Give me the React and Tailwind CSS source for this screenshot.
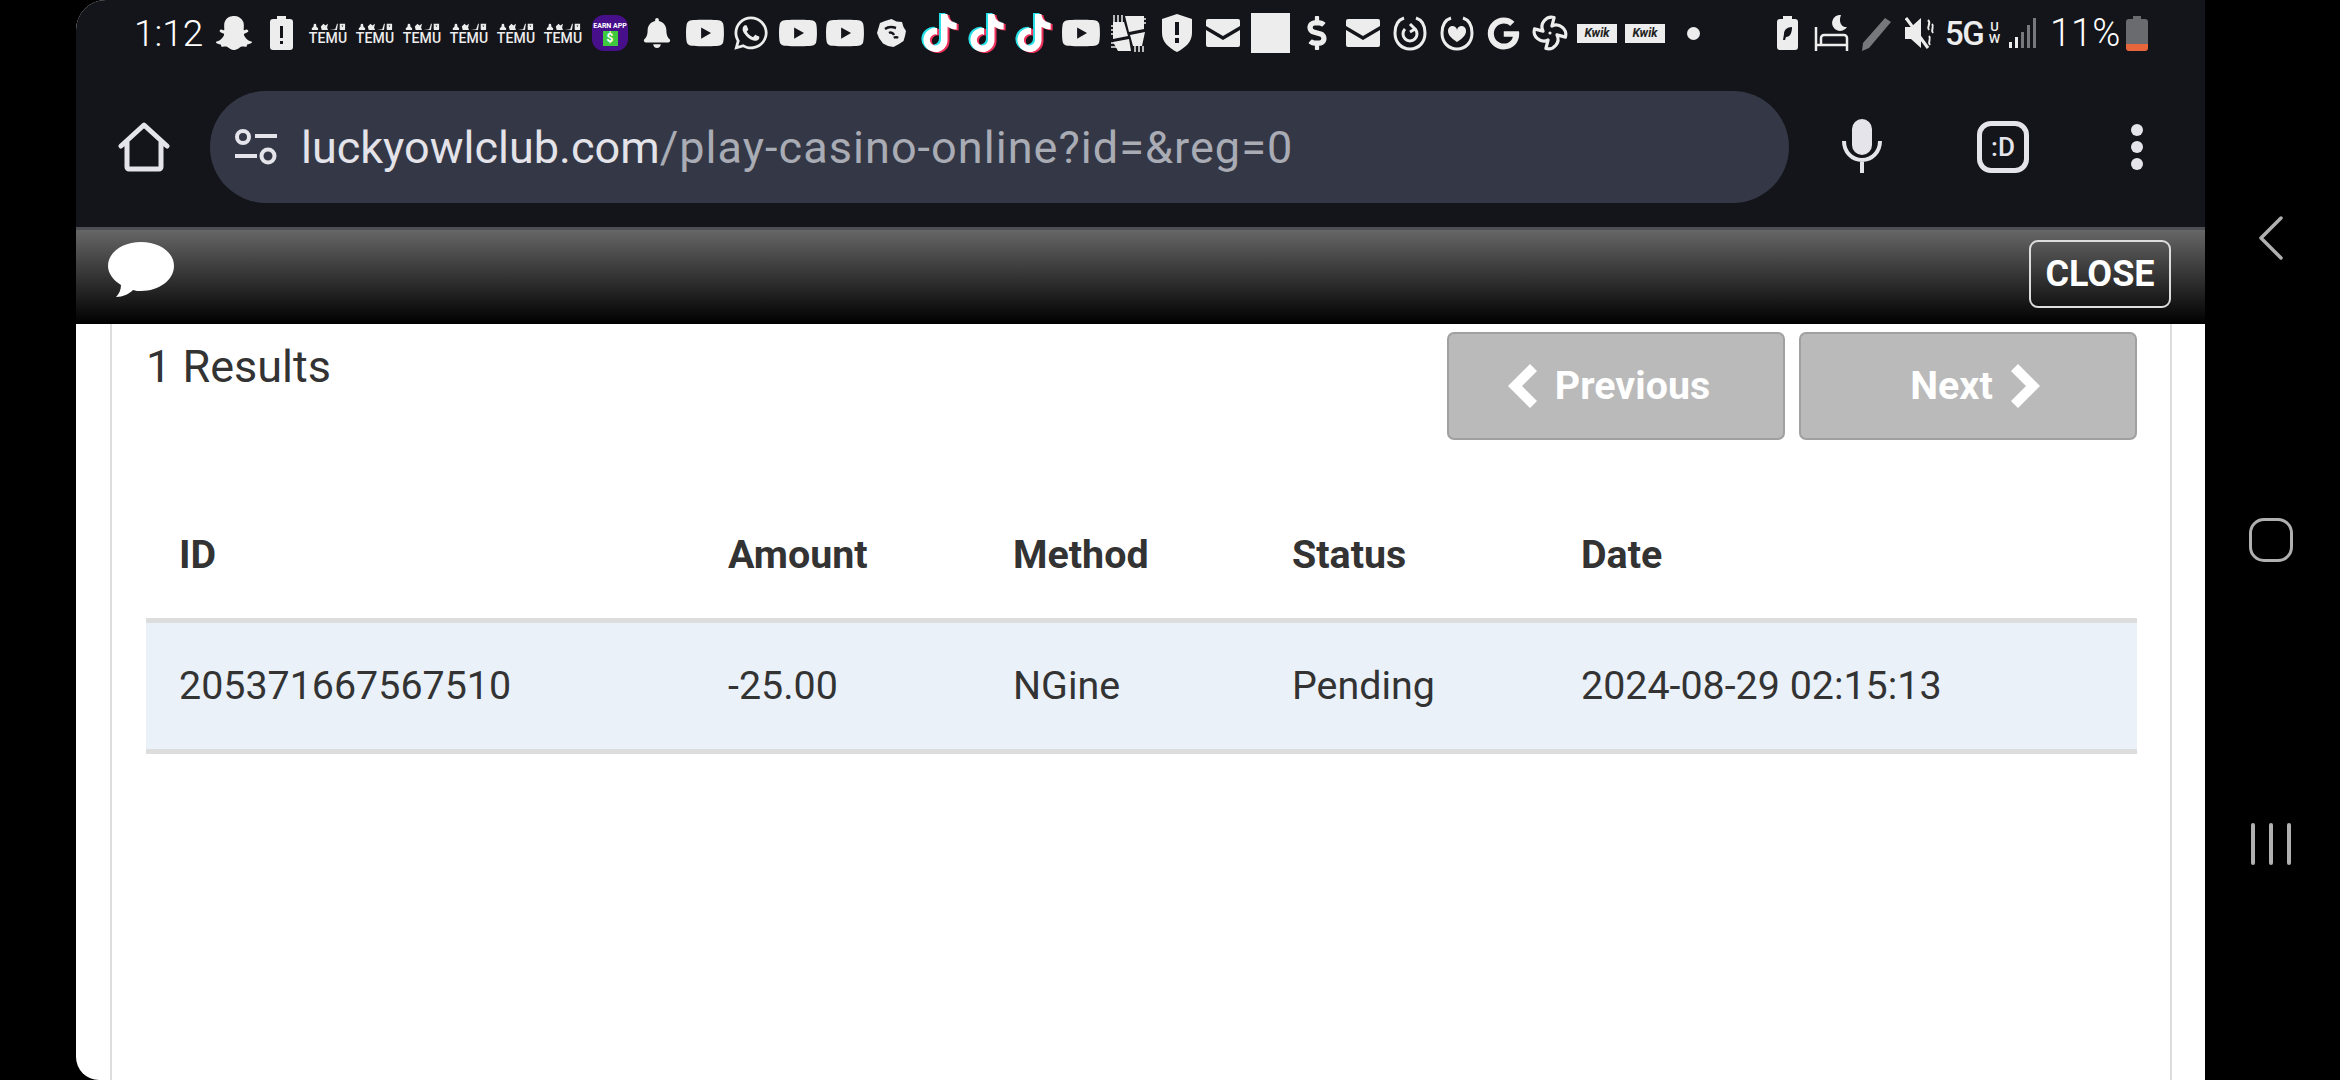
import { FaSnapchatGhost, FaWhatsapp, FaYoutube, FaBell, FaTiktok, FaDollarSign, FaGoogle } from 'react-icons/fa';
import { Fan } from 'lucide-react';

const roboto = "font-['Roboto','Liberation_Sans',sans-serif]";

function Temu({ className }) {
  return (
    <div className={`w-[40px] h-[22px] shrink-0 flex flex-col items-center justify-between ${className}`}>
      <svg width="38" height="9" viewBox="0 0 40 10" fill="#ededed">
        <path d="M2 9h7V7L7 5V3.500a1.500 1.500 0 0 0-3 0V5L2 7z" />
        <path d="M12 5l3-3 2 2 3-2-1 4 1 3h-7z" />
        <path d="M22 9l6-1 2-6 1 0-1 7z" />
        <path fillRule="evenodd" d="M33 2h6v6a1 1 0 0 1-1 1h-4a1 1 0 0 1-1-1zM35 4l1 1.500L37 4z" />
      </svg>
      <span className="text-[14px] leading-[11px] font-medium text-[#ededed] tracking-[0.2px]">TEMU</span>
    </div>
  );
}

function Mail({ className }) {
  return (
    <svg className={`shrink-0 ${className}`} width="34" height="28" viewBox="0 0 34 28">
      <path d="M0 2a2 2 0 0 1 2-2h30a2 2 0 0 1 2 2v5L17 17 0 7z" fill="#ededed" />
      <path d="M0 11l17 10 17-10v15a2 2 0 0 1-2 2H2a2 2 0 0 1-2-2z" fill="#ededed" />
    </svg>
  );
}

function Tok({ className }) {
  return (
    <div className={`relative w-[34px] h-[40px] shrink-0 ${className}`}>
      <FaTiktok size={38} className="absolute left-[-3px] top-[0px] text-[#25e0e6]" />
      <FaTiktok size={38} className="absolute left-[1px] top-[2px] text-[#f0335c]" />
      <FaTiktok size={38} className="absolute left-[-1px] top-[1px] text-white" />
    </div>
  );
}

function Kwik({ className }) {
  return (
    <div className={`w-[40px] h-[19px] bg-[#ededed] shrink-0 flex items-center justify-center text-[12px] italic font-bold text-[#222] leading-none ${className}`}>
      Kwik
    </div>
  );
}

function StatusBar() {
  const yt = 'shrink-0 text-[#ededed]';
  return (
    <div className="h-[66px] flex items-center pl-[58px]">
      <span className="w-[67px] shrink-0 text-[37px] font-light leading-none text-white">1:12</span>
      <FaSnapchatGhost size={36} className="ml-[15px] shrink-0 text-[#ededed]" />
      <svg className="ml-[18px] shrink-0" width="23" height="34" viewBox="0 0 23 34">
        <path fillRule="evenodd" d="M7 0h9v3h4a3 3 0 0 1 3 3v25a3 3 0 0 1-3 3H3a3 3 0 0 1-3-3V6a3 3 0 0 1 3-3h4zM10 10v12h3V10zM10 25v3h3v-3z" fill="#ededed" />
      </svg>
      <Temu className="ml-[15px]" />
      <Temu className="ml-[7px]" />
      <Temu className="ml-[7px]" />
      <Temu className="ml-[7px]" />
      <Temu className="ml-[7px]" />
      <Temu className="ml-[7px]" />
      <div className="ml-[9px] w-[36px] h-[36px] rounded-[12px] bg-[#47108a] shrink-0 flex flex-col items-center justify-end pb-[5px]">
        <span className="text-[7px] leading-[9px] font-bold text-white whitespace-nowrap">EARN APP</span>
        <span className="w-[15px] h-[15px] bg-[#3fc93f] text-white text-[12px] leading-[15px] font-bold text-center">$</span>
      </div>
      <FaBell size={30} className="ml-[14px] shrink-0 text-[#ededed]" />
      <FaYoutube size={40} className={`ml-[13px] ${yt}`} />
      <FaWhatsapp size={38} className={`ml-[7px] ${yt}`} />
      <FaYoutube size={40} className={`ml-[8px] ${yt}`} />
      <FaYoutube size={40} className={`ml-[7px] ${yt}`} />
      <svg className="ml-[12px] shrink-0" width="29" height="29" viewBox="0 0 29 29">
        <path d="M14.500 0l5 2.500 5.500.5 1.500 5 2.500 4-1 5-1.500 5-4.500 3-5.500 3-5.500-1-5-2.500L2 19 0 14l1.500-5L3 4l5-2z" fill="#ededed" />
        <path d="M8 10c4-3 8-2 11-1M12 14c2-1 4 0 5 2M17 19c1-1 3-1 4 0" stroke="#14151a" strokeWidth="2.500" fill="none" />
      </svg>
      <Tok className="ml-[16px]" />
      <Tok className="ml-[13px]" />
      <Tok className="ml-[13px]" />
      <FaYoutube size={40} className={`ml-[11px] ${yt}`} />
      <svg className="ml-[9px] shrink-0" width="36" height="38" viewBox="0 0 36 38">
        <path d="M3 8h11l4 14-15 3zM15 2h19v13l-15 3zM20 21l15-3-3 14H23zM3 28l16-3 2 12H8z" fill="#ededed" />
        <path d="M4 1v7M8 1v7M12 1v7M1 12h4M1 16h4M1 20h4M1 29h6M1 33h6M25 32v6M29 32v6M33 32v6M30 5h6M30 9h6" stroke="#ededed" strokeWidth="1.500" />
      </svg>
      <svg className="ml-[16px] shrink-0" width="30" height="38" viewBox="0 0 30 38">
        <path fillRule="evenodd" d="M15 0l15 5v14c0 9-7 15-15 19C7 34 0 28 0 19V5zM13 8v13h4V8zM13 24v5h4v-5z" fill="#ededed" />
      </svg>
      <Mail className="ml-[14px]" />
      <div className="ml-[11px] w-[39px] h-[40px] bg-[#ededed] shrink-0" />
      <FaDollarSign size={34} className="ml-[10px] shrink-0 text-[#ededed]" />
      <Mail className="ml-[12px]" />
      <svg className="ml-[13px] shrink-0" width="34" height="36" viewBox="0 0 34 36" fill="none" stroke="#ededed">
        <path d="M11 3C5 5 2 11 2 18c0 9 6 16 15 16s15-7 15-16c0-7-3-13-9-15" strokeWidth="3" />
        <path d="M12 14a7 7 0 1 0 10 0M17 9l5 5-5 3" strokeWidth="3" />
      </svg>
      <svg className="ml-[13px] shrink-0" width="34" height="36" viewBox="0 0 34 36" fill="none">
        <path d="M11 3C5 5 2 11 2 18c0 9 6 16 15 16s15-7 15-16c0-7-3-13-9-15" stroke="#ededed" strokeWidth="3" />
        <path d="M17 27c-6-4-9-7-9-11a4.500 4.500 0 0 1 9-1 4.500 4.500 0 0 1 9 1c0 4-3 7-9 11z" fill="#ededed" />
      </svg>
      <FaGoogle size={33} className="ml-[13px] shrink-0 text-[#ededed]" />
      <Fan size={38} strokeWidth={2} className="ml-[11px] shrink-0 text-[#ededed]" />
      <Kwik className="ml-[8px]" />
      <Kwik className="ml-[8px]" />
      <span className="ml-[22px] w-[13px] h-[13px] rounded-full bg-[#ededed] shrink-0" />
      <svg className="ml-[77px] shrink-0" width="21" height="34" viewBox="0 0 21 34">
        <path fillRule="evenodd" d="M6 0h9v3h3a3 3 0 0 1 3 3v25a3 3 0 0 1-3 3H3a3 3 0 0 1-3-3V6a3 3 0 0 1 3-3h3zM15 11c-5 0-8 3-8 7l-1 6h2l1-3c4 0 6-4 6-10z" fill="#ededed" />
      </svg>
      <svg className="ml-[16px] shrink-0" width="35" height="36" viewBox="0 0 35 36" fill="none">
        <path d="M2 12v24M2 30h31v6M33 30v-7a3 3 0 0 0-3-3H10a3 3 0 0 0-3 3v7" stroke="#ededed" strokeWidth="2.500" />
        <path d="M27 0a8 8 0 1 0 6 12c-5 1-9-5-6-12z" fill="#ededed" />
      </svg>
      <svg className="ml-[12px] shrink-0" width="32" height="36" viewBox="0 0 32 36">
        <path d="M24 3l6 4L8 33l-7 3 1-8z" fill="#77787c" />
      </svg>
      <svg className="ml-[12px] shrink-0" width="30" height="34" viewBox="0 0 30 34" fill="none">
        <path d="M0 11h6l10-9v30L6 23H0z" fill="#ededed" />
        <path d="M1 2l22 30" stroke="#ededed" strokeWidth="3" />
        <path d="M23 4c4 4-2 6 1 10M27 8c3 3-2 5 1 9M24 20c3 3-2 5 1 9" stroke="#ededed" strokeWidth="2" />
      </svg>
      <span className="ml-[10px] w-[37px] shrink-0 text-[33px] font-medium leading-none tracking-[-1.5px] text-[#ededed]">5G</span>
      <div className="ml-[7px] w-[11px] flex flex-col items-center text-[13px] leading-[12px] font-medium text-[#ededed]">
        <span>U</span>
        <span>W</span>
      </div>
      <svg className="ml-[9px] shrink-0" width="27" height="30" viewBox="0 0 27 30">
        <rect x="0" y="24" width="3" height="6" fill="#ededed" />
        <rect x="6" y="19" width="3" height="11" fill="#ededed" />
        <rect x="12" y="14" width="3" height="16" fill="#77787c" />
        <rect x="18" y="7" width="3" height="23" fill="#77787c" />
        <rect x="24" y="0" width="3" height="30" fill="#77787c" />
      </svg>
      <span className="ml-[14px] w-[70px] shrink-0 text-[38px] font-light leading-none text-white">11%</span>
      <svg className="ml-[6px] shrink-0" width="22" height="35" viewBox="0 0 22 35">
        <path d="M7 0h8v3h4a3 3 0 0 1 3 3v22H0V6a3 3 0 0 1 3-3h4z" fill="#6a6b6f" />
        <path d="M0 28h22v4a3 3 0 0 1-3 3H3a3 3 0 0 1-3-3z" fill="#e8663c" />
      </svg>
    </div>
  );
}

function Toolbar() {
  return (
    <div className="h-[161px] flex items-center pt-[25px] pb-[24px] pl-[42px]">
      <svg className="shrink-0" width="52" height="50" viewBox="0 0 52 50" fill="none" stroke="#e4e4ea" strokeWidth="5" strokeLinejoin="round" strokeLinecap="round">
        <path d="M3 24L26 3l23 21M9 20v25a2 2 0 0 0 2 2h30a2 2 0 0 0 2-2V20" />
      </svg>
      <div className="ml-[40px] w-[1579px] h-[112px] rounded-full bg-[#343846] shrink-0 flex items-center pl-[25px]">
        <svg className="shrink-0" width="42" height="36" viewBox="0 0 42 36" fill="none" stroke="#e4e4ea" strokeWidth="4">
          <circle cx="8" cy="8" r="6" />
          <path d="M20 7h22M0 27h22" />
          <circle cx="33" cy="27" r="6.500" />
        </svg>
        <div className="ml-[24px] text-[45px] leading-none whitespace-nowrap text-[#a9acb4] tracking-[1.05px]">
          <span className="text-[#e3e3e9] tracking-normal">luckyowlclub.com</span>/play-casino-online?id=&amp;reg=0
        </div>
      </div>
      <svg className="ml-[53px] mt-[-3px] shrink-0" width="40" height="54" viewBox="0 0 40 54" fill="none">
        <rect x="10" y="0" width="20" height="36" rx="10" fill="#e4e4ea" />
        <path d="M2 22c0 11 8 19 18 19s18-8 18-19M20 41v13" stroke="#e4e4ea" strokeWidth="4" />
      </svg>
      <div className="ml-[95px] mt-[-1px] w-[52px] h-[52px] rounded-[14px] border-[5px] border-[#e4e4ea] shrink-0 flex items-center justify-center text-[#e4e4ea] text-[26px] font-medium leading-none">
        :D
      </div>
      <div className="ml-[102px] flex flex-col gap-[5px] shrink-0">
        <span className="w-[12px] h-[12px] rounded-full bg-[#e4e4ea]" />
        <span className="w-[12px] h-[12px] rounded-full bg-[#e4e4ea]" />
        <span className="w-[12px] h-[12px] rounded-full bg-[#e4e4ea]" />
      </div>
    </div>
  );
}

function ChatHeader() {
  return (
    <div className="h-[97px] border-t-[3px] border-[#4d4f55] bg-linear-to-b/srgb from-[#666666] to-[#000000] flex items-start justify-between pl-[32px] pr-[34px]">
      <svg className="mt-[12px]" width="66" height="55" viewBox="0 0 66 55">
        <path d="M33 0c18 0 33 10 33 24S51 49 33 49c-3 0-5 0-8-1-4 4-10 7-17 7 3-3 5-7 5-12C5 38 0 31 0 24 0 10 15 0 33 0z" fill="#ffffff" />
      </svg>
      <div className="mt-[10px] w-[142px] h-[68px] rounded-[9px] border-2 border-[#dddddd] flex items-center justify-center text-white text-[36px] font-bold leading-none">
        CLOSE
      </div>
    </div>
  );
}

function PagerButton({ children, className }) {
  return (
    <div className={`w-[338px] h-[108px] rounded-[7px] border-2 border-[#a0a0a0] bg-[#bababa] flex items-center justify-center gap-[18px] text-white text-[39.4px] font-bold leading-none ${className}`}>
      {children}
    </div>
  );
}

function Chevron({ flip }) {
  return (
    <svg width="29" height="44" viewBox="0 0 29 44" className={flip ? 'rotate-180' : ''}>
      <path d="M22 0l7 7-15 15 15 15-7 7L0 22z" fill="#ffffff" />
    </svg>
  );
}

function Results() {
  const cols = 'grid grid-cols-[549px_285px_279px_289px_1fr] text-[39.4px] leading-none text-[#333333]';
  return (
    <div className="ml-[34px] w-[2062px] h-[756px] border-x-2 border-[#dddddd] pl-[34px] pr-[33px] pt-[8px]">
      <div className="flex justify-between items-start">
        <div className="mt-[10px] text-[45px] leading-[50px] text-[#333333]">1 Results</div>
        <div className="flex gap-[14px]">
          <PagerButton className="pr-[14px]"><Chevron />Previous</PagerButton>
          <PagerButton className="pl-[14px]">Next<Chevron flip /></PagerButton>
        </div>
      </div>
      <div className={`${cols} mt-[50px] h-[133px] border-b-[5px] border-[#dddddd] font-bold items-center`}>
        <div className="pl-[33px] pt-[2px]">ID</div>
        <div className="pl-[33px] pt-[2px]">Amount</div>
        <div className="pl-[33px] pt-[2px]">Method</div>
        <div className="pl-[33px] pt-[2px]">Status</div>
        <div className="pl-[33px] pt-[2px]">Date</div>
      </div>
      <div className={`${cols} h-[131px] border-b-[5px] border-[#dddddd] bg-[#eaf1f9] items-center`}>
        <div className="pl-[33px]">205371667567510</div>
        <div className="pl-[33px]">-25.00</div>
        <div className="pl-[33px]">NGine</div>
        <div className="pl-[33px]">Pending</div>
        <div className="pl-[33px]">2024-08-29 02:15:13</div>
      </div>
    </div>
  );
}

export default function App() {
  return (
    <div className={`w-[2340px] h-[1080px] bg-black flex overflow-hidden ${roboto}`}>
      <div className="ml-[76px] w-[2129px] h-[1080px] bg-white rounded-tl-[30px] rounded-bl-[23px] overflow-hidden shrink-0">
        <div className="bg-[#14151a]">
          <StatusBar />
          <Toolbar />
        </div>
        <ChatHeader />
        <Results />
      </div>
      <div className="flex-1 flex flex-col items-center pt-[216px] pr-[4px] text-[#b0b0b0]">
        <svg width="24" height="44" viewBox="0 0 24 44" fill="none" stroke="#b0b0b0" strokeWidth="3.500" strokeLinecap="round" strokeLinejoin="round">
          <path d="M22 2L2 22l20 20" />
        </svg>
        <div className="mt-[258px] w-[44px] h-[44px] rounded-[15px] border-[3.5px] border-[#b0b0b0]" />
        <div className="mt-[261px] flex gap-[14px]">
          <span className="w-[4px] h-[42px] rounded-full bg-[#b0b0b0]" />
          <span className="w-[4px] h-[42px] rounded-full bg-[#b0b0b0]" />
          <span className="w-[4px] h-[42px] rounded-full bg-[#b0b0b0]" />
        </div>
      </div>
    </div>
  );
}
